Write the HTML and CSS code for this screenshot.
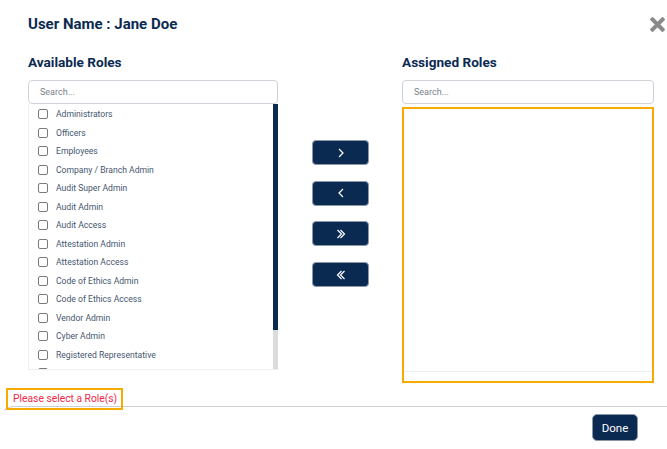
FILE: index.html
```html
<!DOCTYPE html>
<html lang="en">
<head>
<meta charset="utf-8">
<title>Assign Roles</title>
<link rel="stylesheet" href="styles.css">
</head>
<body>
<div class="modal">
  <div class="header">
    <h2 class="title">User Name : Jane Doe</h2>
    <button class="close" aria-label="Close">
      <svg width="15" height="15" viewBox="0 0 15 15"><path d="M2.5 2.5 L12.5 12.5 M12.5 2.5 L2.5 12.5" stroke="#8a8a8a" stroke-width="4" stroke-linecap="square"/></svg>
    </button>
  </div>
  <div class="columns">
    <div class="col col-left">
      <h3 class="col-title">Available Roles</h3>
      <input class="search" type="text" placeholder="Search...">
      <div class="list-wrap">
        <ul class="role-list">
          <li><input type="checkbox" class="cb"><span>Administrators</span></li>
          <li><input type="checkbox" class="cb"><span>Officers</span></li>
          <li><input type="checkbox" class="cb"><span>Employees</span></li>
          <li><input type="checkbox" class="cb"><span>Company / Branch Admin</span></li>
          <li><input type="checkbox" class="cb"><span>Audit Super Admin</span></li>
          <li><input type="checkbox" class="cb"><span>Audit Admin</span></li>
          <li><input type="checkbox" class="cb"><span>Audit Access</span></li>
          <li><input type="checkbox" class="cb"><span>Attestation Admin</span></li>
          <li><input type="checkbox" class="cb"><span>Attestation Access</span></li>
          <li><input type="checkbox" class="cb"><span>Code of Ethics Admin</span></li>
          <li><input type="checkbox" class="cb"><span>Code of Ethics Access</span></li>
          <li><input type="checkbox" class="cb"><span>Vendor Admin</span></li>
          <li><input type="checkbox" class="cb"><span>Cyber Admin</span></li>
          <li><input type="checkbox" class="cb"><span>Registered Representative</span></li>
          <li><input type="checkbox" class="cb"><span>Branch Manager</span></li>
          <li><input type="checkbox" class="cb"><span>Compliance Officer</span></li>
        </ul>
        <div class="scrollbar"><div class="thumb"></div></div>
      </div>
    </div>
    <div class="col-mid">
      <button class="move-btn" aria-label="Move right">
        <svg width="8" height="10" viewBox="0 0 8 10"><path d="M2 1 L6 5 L2 9" fill="none" stroke="#fff" stroke-width="1.2"/></svg>
      </button>
      <button class="move-btn" aria-label="Move left">
        <svg width="8" height="10" viewBox="0 0 8 10"><path d="M6 1 L2 5 L6 9" fill="none" stroke="#fff" stroke-width="1.2"/></svg>
      </button>
      <button class="move-btn" aria-label="Move all right">
        <svg width="10" height="10" viewBox="0 0 10 10"><path d="M1.5 1 L5.5 5 L1.5 9 M4.5 1 L8.5 5 L4.5 9" fill="none" stroke="#fff" stroke-width="1.2"/></svg>
      </button>
      <button class="move-btn" aria-label="Move all left">
        <svg width="10" height="10" viewBox="0 0 10 10"><path d="M5.5 1 L1.5 5 L5.5 9 M8.5 1 L4.5 5 L8.5 9" fill="none" stroke="#fff" stroke-width="1.2"/></svg>
      </button>
    </div>
    <div class="col col-right">
      <h3 class="col-title">Assigned Roles</h3>
      <input class="search" type="text" placeholder="Search...">
      <div class="assigned-box">
        <div class="assigned-inner"></div>
      </div>
    </div>
  </div>
  <div class="error">Please select a Role(s)</div>
  <div class="footer">
    <button class="done">Done</button>
  </div>
</div>
</body>
</html>
```
FILE: styles.css
```css
* { box-sizing: border-box; }
body {
  margin: 0;
  font-family: Roboto, "Noto Sans", sans-serif;
  background: #fff;
  color: #0b2a52;
}
.modal {
  width: 667px;
  height: 449px;
  overflow: hidden;
}
.header {
  display: flex;
  justify-content: space-between;
  align-items: flex-start;
  padding: 15px 2px 0 28px;
}
.title {
  margin: 0;
  font-size: 15px;
  line-height: 18px;
  font-weight: 700;
  color: #0b2a52;
}
.close {
  border: 0;
  background: none;
  padding: 0;
  margin-top: 2px;
  width: 15px;
  height: 15px;
  display: block;
}
.close svg { display: block; }
.columns {
  display: flex;
  align-items: flex-start;
  padding-left: 28px;
  margin-top: 21px;
}
.col-left { width: 250px; }
.col-right { width: 252px; }
.col-title {
  margin: 0 0 9px;
  font-size: 13.6px;
  line-height: 17px;
  font-weight: 700;
  color: #0b2a52;
}
.search {
  display: block;
  width: 100%;
  height: 24px;
  border: 1px solid #cfd2d8;
  border-radius: 4px;
  padding: 0 11px;
  font-family: Roboto, sans-serif;
  font-size: 9px;
  color: #333;
  outline: none;
}
.search::placeholder { color: #7a7f88; }
.list-wrap {
  display: flex;
  height: 266px;
  border-left: 1px solid #eceef1;
  border-bottom: 1px solid #eceef1;
}
.role-list {
  flex: 1;
  list-style: none;
  margin: 0;
  padding: 1px 0 0 9px;
  overflow: hidden;
}
.role-list li {
  display: flex;
  align-items: center;
  height: 18.5px;
  gap: 8px;
  font-size: 8.6px;
  color: #46566e;
}
.scrollbar {
  width: 5px;
  background: #dcdcdc;
  flex: none;
}
.thumb {
  height: 226px;
  background: #0b2a52;
}
.cb {
  appearance: none;
  -webkit-appearance: none;
  margin: 0;
  width: 10px;
  height: 10px;
  border: 1px solid #7a7a7a;
  border-radius: 2px;
  background: #fff;
  flex: none;
}
.col-mid {
  width: 57px;
  margin: 0 33px 0 34px;
  padding-top: 86px;
  display: flex;
  flex-direction: column;
  gap: 15.7px;
}
.move-btn {
  width: 57px;
  height: 25px;
  background: #0b2a52;
  border: 1px solid #8c98a8;
  border-radius: 4px;
  display: flex;
  align-items: center;
  justify-content: center;
  padding: 0;
}
.move-btn svg { display: block; }
.assigned-box {
  margin-top: 3px;
  height: 276px;
  border: 2px solid #f7ab00;
  display: flex;
  flex-direction: column;
}
.assigned-inner {
  height: 263px;
  border-bottom: 1px solid #eceef1;
}
.error {
  position: relative;
  z-index: 1;
  width: 117px;
  height: 22px;
  margin: 5px 0 0 6px;
  border: 2px solid #f7ab00;
  padding: 0 0 0 5px;
  font-size: 10.3px;
  line-height: 18px;
  white-space: nowrap;
  color: #ef2848;
  background: transparent;
}
.footer {
  margin-top: -4px;
  border-top: 1px solid #cfcfcf;
  border-left: 1px solid transparent;
  border-top-left-radius: 14px;
  display: flex;
  justify-content: flex-end;
  padding: 7px 29px 0 0;
}
.done {
  width: 46px;
  height: 27px;
  background: #0b2a52;
  color: #fff;
  border: 1px solid #8c98a8;
  border-radius: 5px;
  font-family: Roboto, sans-serif;
  font-size: 11.5px;
  font-weight: 400;
  padding: 0;
}
```
